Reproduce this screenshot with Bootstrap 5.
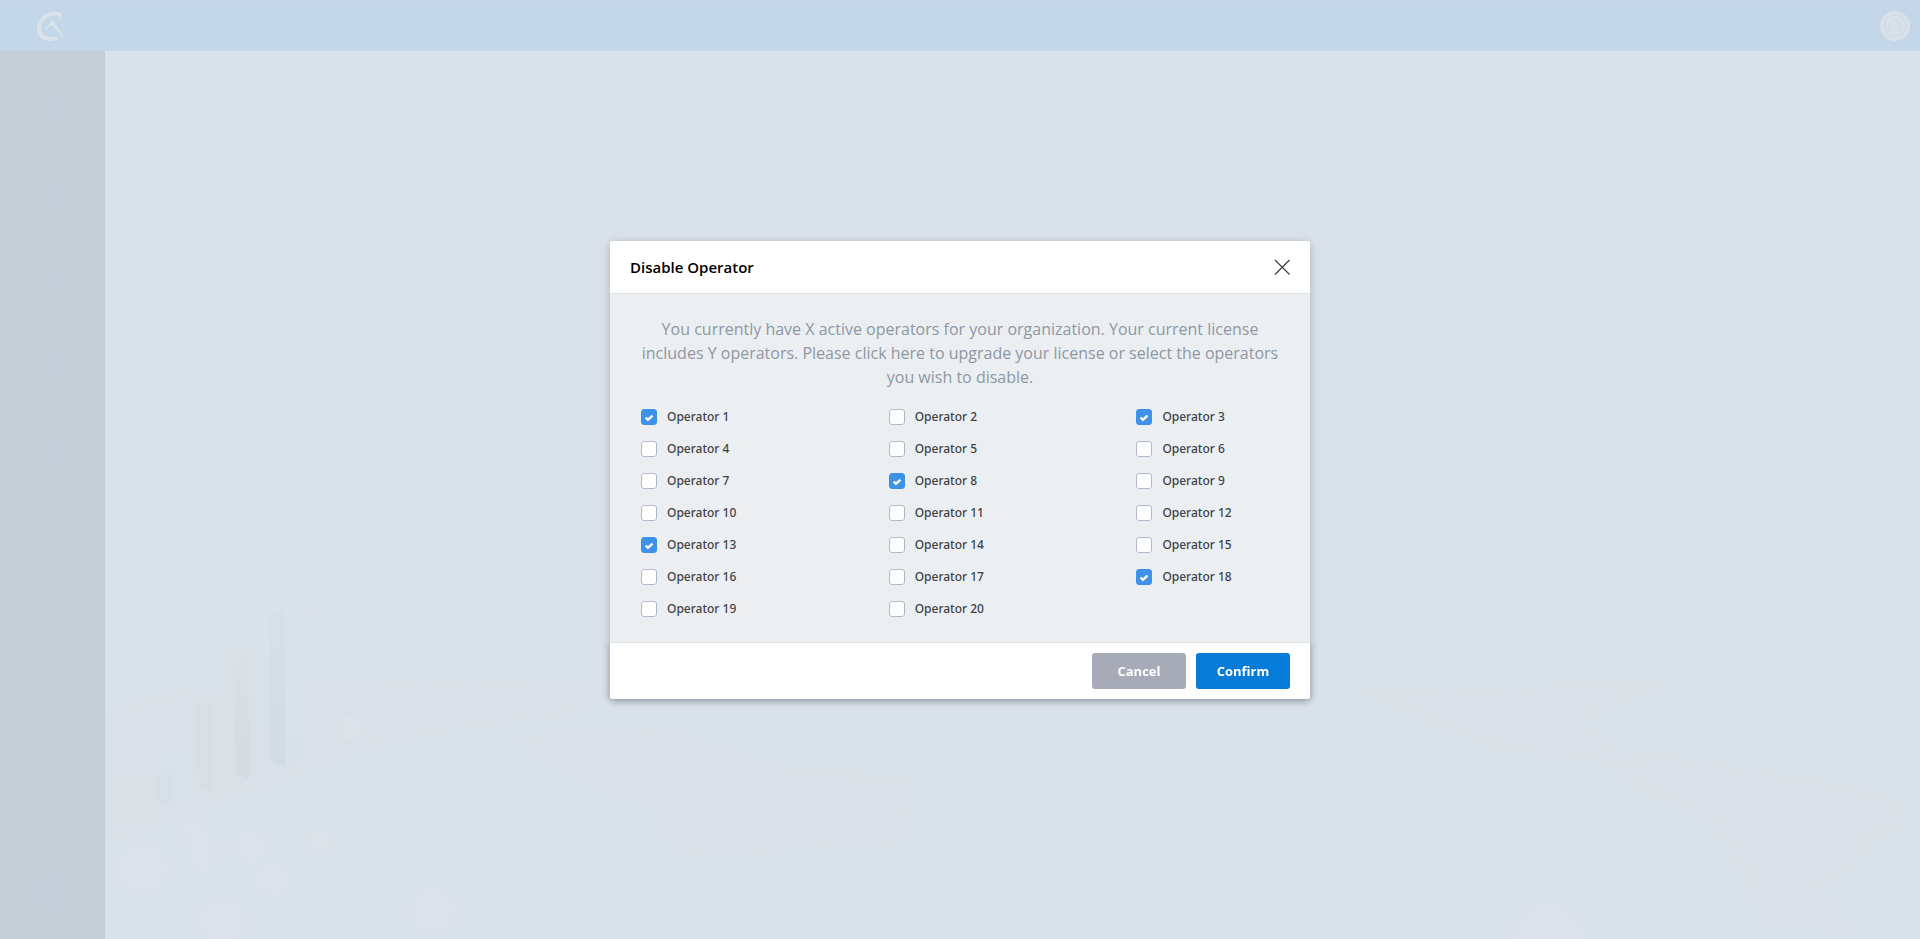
<!DOCTYPE html>
<html lang="en">
<head>
<meta charset="utf-8">
<meta name="viewport" content="width=device-width, initial-scale=1">
<title>Disable Operator</title>
<link href="https://cdn.jsdelivr.net/npm/bootstrap@5.3.0/dist/css/bootstrap.min.css" rel="stylesheet">
<style>
  body { font-family: "Open Sans", sans-serif; background: #dae2e9; }
  .top-bar { height: 51px; background: #c4d7e8; border-top: 1px solid #cfd8e1; padding: 0 10px 0 36px; }
  .side-bar { width: 105px; background: #c4ced7; padding-top: 39px; padding-bottom: 21px; }
  .side-item { width: 60px; height: 86px; }
  .side-dot { width: 36px; height: 36px; background: #c4cfd9; }
  .side-dot-lg { width: 50px; height: 50px; background: #c4cfd9; }
  .side-line { width: 60px; height: 5px; background: #c4cfd9; margin-top: 11px; }
  .scene { min-width: 0; }
  .scene svg { inset: 0; }
  .op-dialog { max-width: 700px; }
  .op-dialog .modal-content { border: 0; border-radius: 3px; color: #3f4245; box-shadow: 0 2px 8px rgba(40, 60, 80, .3); }
  .op-dialog .modal-header { height: 53px; padding: 0 20px; background: #fff; border-bottom: 1px solid #dfe2e5; border-radius: 3px 3px 0 0; }
  .op-dialog .modal-title { font-size: 15px; line-height: 20px; font-weight: 600; color: #000; }
  .op-dialog .modal-body { padding: 23px 24px 18px; background: #ebeff2; }
  .op-note { font-size: 16px; line-height: 24px; color: #8f97a3; margin-bottom: 12px; }
  .op-grid { display: grid; grid-template-columns: 5fr 5fr 3fr; padding: 0 1px 0 7px; }
  .op-row { height: 32px; gap: 10px; }
  .op-row label { font-family: "Noto Sans", "Open Sans", sans-serif; font-size: 12px; line-height: 16px; font-weight: 500; color: #3f4245; }
  .op-row .form-check-input { width: 16px; height: 16px; margin: 0; border: 1px solid #b4b8cb; border-radius: 3px; background-color: #fff; }
  .op-row .form-check-input:checked { border-color: #3d91e8; background-color: #3d91e8; background-size: 16px 16px;
    background-image: url("data:image/svg+xml,%3csvg xmlns='http://www.w3.org/2000/svg' viewBox='0 0 16 16'%3e%3cpath fill='none' stroke='%23fff' stroke-width='2.400' d='M4.600 8.500l2.300 2.300 4.600-4.200'/%3e%3c/svg%3e"); }
  .op-dialog .modal-footer { height: 56px; padding: 0 20px; gap: 10px; background: #fff; border: 0; border-radius: 0 0 3px 3px; box-shadow: 0 1px 6px rgba(40, 60, 80, .25); clip-path: inset(0 -10px -12px -10px); }
  .op-btn { width: 94px; height: 36px; margin: 0; padding: 0; border: 0; border-radius: 3px; font-size: 13px; line-height: 36px; font-weight: 700; color: #fff; }
  .op-cancel { background: #a7abb8; }
  .op-confirm { background: #067bd8; }
</style>
</head>
<body>
<div class="d-flex flex-column min-vh-100">
  <header class="top-bar d-flex align-items-center justify-content-between">
    <a href="#" class="d-flex" aria-label="Home">
      <svg width="32" height="32" viewBox="0 0 32 32" fill="#dae3eb">
        <path d="M26 4 24 8 22 6C14 4 5 10 5 18c0 8 7 11 14 8l3 3C12 34 0 29 1 18 2 5 16-2 26 4z"/>
        <path d="M7.500 20.500 16.500 9.500 31 32 16 15z"/>
      </svg>
    </a>
    <a href="#" class="d-flex" aria-label="Account">
      <svg width="30" height="30" viewBox="0 0 30 30" fill="none">
        <circle cx="15" cy="15" r="15" fill="#d9e2ea"/>
        <circle cx="15" cy="15" r="11" stroke="#d0dce6" stroke-width="1.500"/>
        <path d="M8 20Q8 13 15 8 22 13 22 20zM9 22q6 4 12 0" stroke="#d0dce6"/>
      </svg>
    </a>
  </header>
  <div class="d-flex flex-grow-1">
    <nav class="side-bar flex-shrink-0 d-flex flex-column align-items-center" aria-label="Main">
      <div class="side-item d-flex flex-column align-items-center"><span class="side-dot rounded-circle"></span><span class="side-line"></span></div>
      <div class="side-item d-flex flex-column align-items-center"><span class="side-dot rounded-circle"></span><span class="side-line"></span></div>
      <div class="side-item d-flex flex-column align-items-center"><span class="side-dot rounded-circle"></span><span class="side-line"></span></div>
      <div class="side-item d-flex flex-column align-items-center"><span class="side-dot rounded-circle"></span><span class="side-line"></span></div>
      <div class="side-item d-flex flex-column align-items-center"><span class="side-dot rounded-circle"></span><span class="side-line"></span></div>
      <span class="side-dot-lg rounded-circle mt-auto"></span>
    </nav>
    <main class="scene flex-grow-1 position-relative overflow-hidden">
      <svg class="position-absolute w-100 h-100" viewBox="105 51 1815 888" preserveAspectRatio="xMinYMax slice" aria-hidden="true">
        <defs>
          <linearGradient id="ground" x1="0" y1="0" x2="0" y2="1">
            <stop offset="0" stop-color="#d9e1ea" stop-opacity="0"/>
            <stop offset="1" stop-color="#d9e1ea"/>
          </linearGradient>
          <linearGradient id="fade" x1="0" y1="0" x2="0" y2="1">
            <stop offset="0" stop-color="#d7e0e9"/>
            <stop offset="1" stop-color="#d0dbe4"/>
          </linearGradient>
          <linearGradient id="grey" x1="0" y1="0" x2="0" y2="1">
            <stop offset="0" stop-color="#d9e0e6"/>
            <stop offset="1" stop-color="#d3dbe2"/>
          </linearGradient>
        </defs>
        <path fill="#d9e0e7" d="M105 713Q180 685 290 685L620 686Q600 715 460 724L360 746 105 842z" opacity=".8"/>
        <path fill="#d9e0e7" d="M524 740Q580 725 660 730L780 770 900 780Q920 790 900 840L680 855 660 810 540 755z" opacity=".6"/>
        <path fill="#d9e0e7" d="M1359 690 1655 687Q1600 700 1577 723L1632 763 1498 747z"/>
        <path fill="#d9e0e7" d="M1628 780Q1625 760 1660 757L1786 777 1885 797Q1895 815 1889 830L1862 837 1855 862 1814 887 1853 937 1774 923Q1740 870 1723 823z"/>
        <path fill="url(#ground)" d="M105 842 300 780 700 860 1400 870 1920 900V939H105z"/>
        <path fill="#d9e0e6" d="M109 778 131 783V819L115 815zM131 783 157 776V812L131 819zM211 703 234 700V785L211 792z"/>
        <path fill="url(#grey)" d="M233 653 249 649V779L236 774z"/>
        <path fill="#d7dfe5" d="M194 703H211V792L199 788z"/>
        <path fill="#d9e1e8" d="M249 649 270 655V772L249 779z"/>
        <path fill="url(#fade)" d="M269 614 285 609V767L271 761z"/>
        <path fill="#d9e1ea" d="M285 609 305 612V761L285 767z"/>
        <path fill="#d7e0e9" d="M285 737H305V761L285 767z"/>
        <path fill="#d8e0e8" d="M153 749 173 751V806L158 801z"/>
        <path fill="#d4dfe7" d="M157 774H173V806L158 801z"/>
        <path fill="#d8e0e8" d="M173 751 197 749V800L173 806z"/>
        <g fill="#dbe2e9">
          <circle cx="143" cy="868" r="21"/><circle cx="250" cy="846" r="12"/><circle cx="273" cy="879" r="14"/>
          <circle cx="433" cy="911" r="20"/><circle cx="222" cy="922" r="21"/><circle cx="318" cy="842" r="9"/>
          <circle cx="1548" cy="940" r="34"/><ellipse cx="351" cy="728" rx="9" ry="14"/>
          <path d="M180 820q25-2 30 30-4 18-10 23-6-30-20-53z"/>
        </g>
      </svg>
    </main>
  </div>
</div>

<div class="modal d-block" tabindex="-1" role="dialog" aria-labelledby="op-title">
  <form class="modal-dialog modal-dialog-centered op-dialog">
    <div class="modal-content">
      <div class="modal-header">
        <h1 class="modal-title" id="op-title">Disable Operator</h1>
        <button type="button" class="btn p-0 border-0 d-flex" aria-label="Close">
          <svg width="16" height="16" viewBox="0 0 16 16" fill="none" stroke="#444" stroke-width="1.300"><path d="M1 1l14.500 14.500M15.500 1L1 15.500"/></svg>
        </button>
      </div>
      <div class="modal-body">
        <p class="op-note text-center">You currently have X active operators for your organization. Your current license includes Y operators. Please click here to upgrade your license or select the operators you wish to disable.</p>
        <div class="op-grid" role="group" aria-label="Operators">
          <div class="op-row d-flex align-items-center"><input class="form-check-input" type="checkbox" id="op1" checked><label for="op1">Operator 1</label></div>
          <div class="op-row d-flex align-items-center"><input class="form-check-input" type="checkbox" id="op2"><label for="op2">Operator 2</label></div>
          <div class="op-row d-flex align-items-center"><input class="form-check-input" type="checkbox" id="op3" checked><label for="op3">Operator 3</label></div>
          <div class="op-row d-flex align-items-center"><input class="form-check-input" type="checkbox" id="op4"><label for="op4">Operator 4</label></div>
          <div class="op-row d-flex align-items-center"><input class="form-check-input" type="checkbox" id="op5"><label for="op5">Operator 5</label></div>
          <div class="op-row d-flex align-items-center"><input class="form-check-input" type="checkbox" id="op6"><label for="op6">Operator 6</label></div>
          <div class="op-row d-flex align-items-center"><input class="form-check-input" type="checkbox" id="op7"><label for="op7">Operator 7</label></div>
          <div class="op-row d-flex align-items-center"><input class="form-check-input" type="checkbox" id="op8" checked><label for="op8">Operator 8</label></div>
          <div class="op-row d-flex align-items-center"><input class="form-check-input" type="checkbox" id="op9"><label for="op9">Operator 9</label></div>
          <div class="op-row d-flex align-items-center"><input class="form-check-input" type="checkbox" id="op10"><label for="op10">Operator 10</label></div>
          <div class="op-row d-flex align-items-center"><input class="form-check-input" type="checkbox" id="op11"><label for="op11">Operator 11</label></div>
          <div class="op-row d-flex align-items-center"><input class="form-check-input" type="checkbox" id="op12"><label for="op12">Operator 12</label></div>
          <div class="op-row d-flex align-items-center"><input class="form-check-input" type="checkbox" id="op13" checked><label for="op13">Operator 13</label></div>
          <div class="op-row d-flex align-items-center"><input class="form-check-input" type="checkbox" id="op14"><label for="op14">Operator 14</label></div>
          <div class="op-row d-flex align-items-center"><input class="form-check-input" type="checkbox" id="op15"><label for="op15">Operator 15</label></div>
          <div class="op-row d-flex align-items-center"><input class="form-check-input" type="checkbox" id="op16"><label for="op16">Operator 16</label></div>
          <div class="op-row d-flex align-items-center"><input class="form-check-input" type="checkbox" id="op17"><label for="op17">Operator 17</label></div>
          <div class="op-row d-flex align-items-center"><input class="form-check-input" type="checkbox" id="op18" checked><label for="op18">Operator 18</label></div>
          <div class="op-row d-flex align-items-center"><input class="form-check-input" type="checkbox" id="op19"><label for="op19">Operator 19</label></div>
          <div class="op-row d-flex align-items-center"><input class="form-check-input" type="checkbox" id="op20"><label for="op20">Operator 20</label></div>
        </div>
      </div>
      <div class="modal-footer">
        <button type="button" class="btn op-btn op-cancel">Cancel</button>
        <button type="submit" class="btn op-btn op-confirm">Confirm</button>
      </div>
    </div>
  </form>
</div>
<script src="https://cdn.jsdelivr.net/npm/bootstrap@5.3.0/dist/js/bootstrap.bundle.min.js"></script>
</body>
</html>
